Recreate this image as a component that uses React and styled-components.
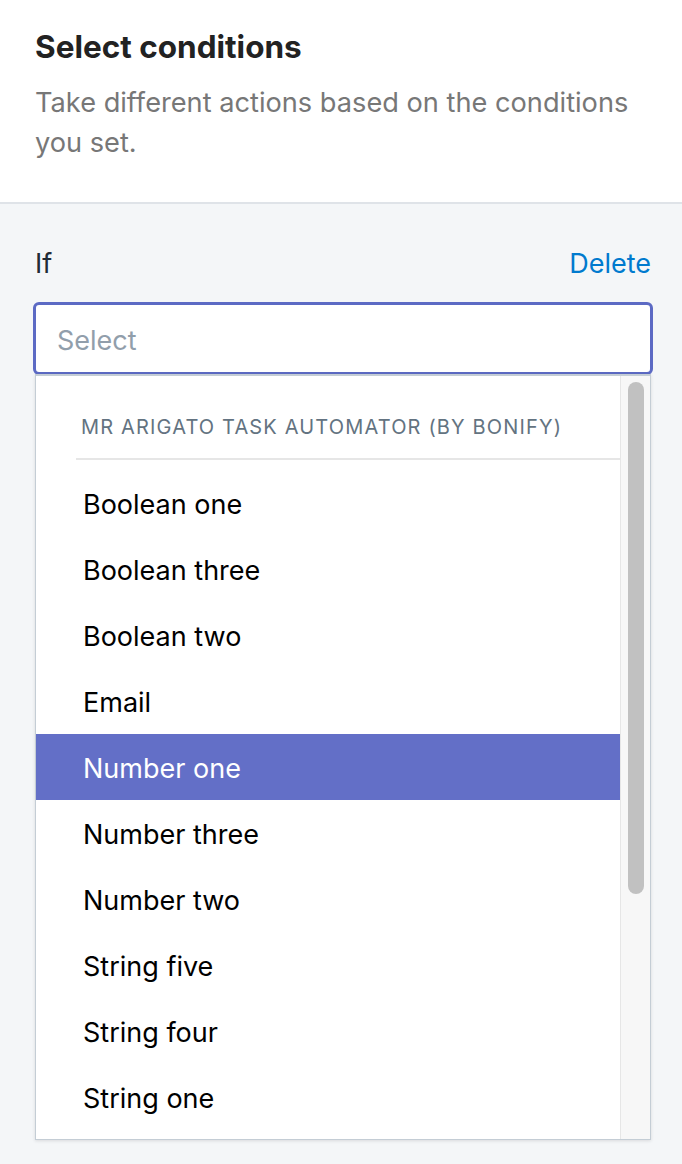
import React from "react";
import styled, { createGlobalStyle } from "styled-components";

const GlobalStyle = createGlobalStyle`
  html, body {
    margin: 0;
    padding: 0;
    background: #f4f6f8;
    font-family: Inter, Roboto, "Helvetica Neue", Arial, sans-serif;
    -webkit-font-smoothing: antialiased;
  }
`;

const Page = styled.div`
  min-height: 1164px;
  background: #f4f6f8;
`;

const Header = styled.header`
  background: #fff;
  border-bottom: 2px solid #dfe3e8;
  padding: 27px 35px 39px;
`;

const Title = styled.h2`
  margin: 0 0 16px;
  font-size: 31.5px;
  line-height: 40px;
  font-weight: 700;
  color: #222;
`;

const Subtitle = styled.p`
  margin: 0;
  font-size: 27.2px;
  line-height: 40px;
  color: #777;
`;

const Body = styled.section`
  padding: 39px 29px 0 33px;
`;

const LabelRow = styled.div`
  display: flex;
  justify-content: space-between;
  align-items: center;
  height: 40px;
  padding: 0 2px;
  margin-bottom: 19px;
  font-size: 27px;
`;

const Label = styled.span`
  color: #212b36;
`;

const LinkButton = styled.button`
  border: 0;
  background: none;
  padding: 0;
  font: inherit;
  color: #007ace;
  cursor: pointer;
`;

const SelectBox = styled.div`
  height: 73px;
  box-sizing: border-box;
  border: 3px solid #5c6ac4;
  border-radius: 6px;
  background: #fff;
  display: flex;
  align-items: center;
  padding: 3px 0 0 21px;
  font-size: 27px;
  color: #919eab;
`;

const Dropdown = styled.div`
  margin: -1px 2px 0;
  height: 766px;
  box-sizing: border-box;
  border: 1px solid #c4cdd5;
  border-top-width: 2px;
  background: #fff;
  box-shadow: 0 1px 3px rgba(63, 63, 68, 0.15);
  display: flex;
  overflow: hidden;
`;

const List = styled.ul`
  flex: 1;
  margin: 0;
  padding: 34px 0 0;
  list-style: none;
`;

const GroupTitle = styled.li`
  margin-left: 40px;
  padding: 1px 0 15px 5px;
  border-bottom: 2px solid #e6e6e6;
  margin-bottom: 10px;
  font-size: 20px;
  line-height: 32px;
  letter-spacing: 1.15px;
  color: #637381;
  text-transform: uppercase;
`;

const Option = styled.li`
  height: 66px;
  box-sizing: border-box;
  display: flex;
  align-items: center;
  padding: 2px 0 0 47px;
  font-size: 27px;
  color: ${(p) => (p.$active ? "#fff" : "#000")};
  background: ${(p) => (p.$active ? "#636fc7" : "transparent")};
`;

const Track = styled.div`
  width: 30px;
  flex: none;
  box-sizing: border-box;
  border-left: 1px solid #e6e6e6;
  background: #f7f7f7;
  padding: 6px 0 0 7px;
`;

const Thumb = styled.div`
  width: 16px;
  height: 512px;
  border-radius: 8px;
  background: #c1c1c1;
`;

const options = [
  "Boolean one",
  "Boolean three",
  "Boolean two",
  "Email",
  "Number one",
  "Number three",
  "Number two",
  "String five",
  "String four",
  "String one",
];

export default function App() {
  return (
    <Page>
      <GlobalStyle />
      <Header>
        <Title>Select conditions</Title>
        <Subtitle>Take different actions based on the conditions you set.</Subtitle>
      </Header>
      <Body>
        <LabelRow>
          <Label>If</Label>
          <LinkButton type="button">Delete</LinkButton>
        </LabelRow>
        <SelectBox>Select</SelectBox>
        <Dropdown>
          <List>
            <GroupTitle>Mr Arigato Task Automator (by Bonify)</GroupTitle>
            {options.map((o) => (
              <Option key={o} $active={o === "Number one"}>
                {o}
              </Option>
            ))}
          </List>
          <Track>
            <Thumb />
          </Track>
        </Dropdown>
      </Body>
    </Page>
  );
}
